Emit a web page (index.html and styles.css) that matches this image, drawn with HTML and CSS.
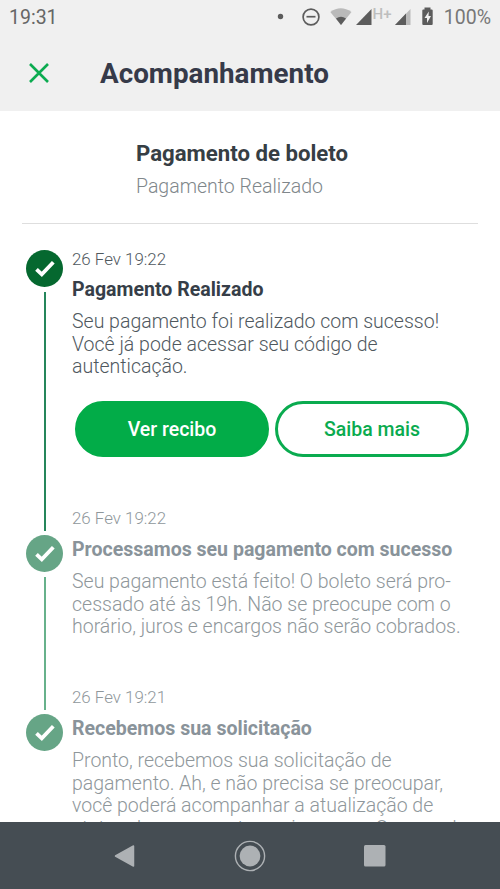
FILE: index.html
```html
<!DOCTYPE html>
<html lang="pt-BR">
<head>
<meta charset="utf-8">
<title>Acompanhamento</title>
<link rel="stylesheet" href="styles.css">
</head>
<body>
<div class="screen">
  <header class="top">
    <div class="status">
      <span class="clock">19:31</span>
      <svg class="status-icons" width="164" height="34" viewBox="0 0 164 34">
        <circle cx="10.5" cy="16.5" r="2.7" fill="#5c5c5c"/>
        <circle cx="41" cy="17" r="7.9" fill="none" stroke="#5c5c5c" stroke-width="1.7"/>
        <path d="M36.5 16.7h9" stroke="#5c5c5c" stroke-width="1.7"/>
        <path d="M60.3 12Q70.700 4.500 81.500 12L71 25Z" fill="#bababa"/>
        <path d="M66 18.600Q71 15 76 18.600L71 25Z" fill="#5c5c5c"/>
        <path d="M86 25L101.500 9V25Z" fill="#5c5c5c"/>
        <path d="M125 25L140.500 9V25Z" fill="#bababa"/>
        <path d="M125 25L136 13.500V25Z" fill="#5c5c5c"/>
        <path d="M154.500 7.500h6v2h1.200q1 0 1 1V24q0 1-1 1h-8.400q-1 0-1-1V10.500q0-1 1-1h1.200Z" fill="#5c5c5c"/>
        <path d="M158.800 11.500L154.500 18h2.500v5l4-7h-2.500Z" fill="#f0f0f0"/>
        <text class="network" x="102.500" y="19">H+</text>
      </svg>
      <span class="battery">100%</span>
    </div>
    <div class="appbar">
      <svg class="close" width="20" height="20" viewBox="0 0 20 20"><path d="M1 1L19 19M19 1L1 19" stroke="#0cab50" stroke-width="2.600"/></svg>
      <h1>Acompanhamento</h1>
    </div>
  </header>
  <main>
    <section class="summary">
      <h2>Pagamento de boleto</h2>
      <p>Pagamento Realizado</p>
    </section>
    <ol class="timeline">
      <li class="step current">
        <div class="rail"><svg class="check" width="37" height="37" viewBox="0 0 37 37"><circle cx="18.500" cy="18.500" r="18.500"/><path d="M10.500 19.300L15.800 24.400L27.300 12.300"/></svg><i class="line"></i></div>
        <div class="body">
          <time>26 Fev 19:22</time>
          <h3>Pagamento Realizado</h3>
          <p>Seu pagamento foi realizado com sucesso!<br>Você já pode acessar seu código de<br>autenticação.</p>
          <div class="actions"><button class="primary">Ver recibo</button><button>Saiba mais</button></div>
        </div>
      </li>
      <li class="step done">
        <div class="rail"><svg class="check" width="37" height="37" viewBox="0 0 37 37"><circle cx="18.500" cy="18.500" r="18.500"/><path d="M10.500 19.300L15.800 24.400L27.300 12.300"/></svg><i class="line"></i></div>
        <div class="body">
          <time>26 Fev 19:22</time>
          <h3>Processamos seu pagamento com sucesso</h3>
          <p>Seu pagamento está feito! O boleto será pro-<br>cessado até às 19h. Não se preocupe com o<br>horário, juros e encargos não serão cobrados.</p>
        </div>
      </li>
      <li class="step last">
        <div class="rail"><svg class="check" width="37" height="37" viewBox="0 0 37 37"><circle cx="18.500" cy="18.500" r="18.500"/><path d="M10.500 19.300L15.800 24.400L27.300 12.300"/></svg></div>
        <div class="body">
          <time>26 Fev 19:21</time>
          <h3>Recebemos sua solicitação</h3>
          <p>Pronto, recebemos sua solicitação de<br>pagamento. Ah, e não precisa se preocupar,<br>você poderá acompanhar a atualização de<br>status do pagamento aqui mesmo. O prazo de</p>
        </div>
      </li>
    </ol>
  </main>
  <nav>
    <svg width="22" height="24" viewBox="0 0 22 24"><path d="M1.500 12L19.500 2V22Z" fill="#adb1b4" stroke="#adb1b4" stroke-width="1.500" stroke-linejoin="round"/></svg>
    <svg width="32" height="32" viewBox="0 0 32 32"><circle cx="16" cy="16" r="14.600" fill="none" stroke="#adb1b4" stroke-width="1.400"/><circle cx="16" cy="16" r="10.400" fill="#adb1b4"/></svg>
    <svg width="22" height="22" viewBox="0 0 22 22"><rect width="21.500" height="21.500" rx="1.500" fill="#adb1b4"/></svg>
  </nav>
</div>
</body>
</html>
```
FILE: styles.css
```css
* { box-sizing: border-box; margin: 0; padding: 0; }
body { font-family: Roboto, "Liberation Sans", sans-serif; background: #fff; }
.screen { width: 500px; height: 889px; display: flex; flex-direction: column; overflow: hidden; }
.top { flex: none; height: 111px; background: #f0f0f0; }
.status { display: flex; align-items: center; height: 34px; padding: 0 9px; color: #666; }
.clock { font-size: 19.5px; line-height: 34px; margin-right: auto; padding-top: 2px; }
.status-icons { margin-right: 10px; }
.network { font: 500 15px Roboto, sans-serif; fill: #bebebe; }
.battery { font-size: 19.500px; color: #777; padding-top: 1px; }
.appbar { display: flex; align-items: center; gap: 51px; height: 77px; padding-left: 29px; }
h1 { font-size: 27.800px; font-weight: 700; color: #363a49; padding-top: 1px; }
main { flex: 1; min-height: 0; overflow: hidden; }
.summary { height: 113px; margin: 0 22px; padding: 27px 0 0 114px; border-bottom: 1px solid #dedede; }
h2 { font-size: 22.200px; line-height: 30px; color: #363e44; font-weight: 700; }
.summary p { font-size: 19.500px; line-height: 26px; margin-top: 6px; font-weight: 300; color: #80878b; }
.timeline { list-style: none; }
.step { display: flex; padding-left: 26px; }
.current { height: 285px; margin-top: 26px; }
.done { height: 179px; }
.rail { width: 46px; flex: none; display: flex; flex-direction: column; }
.check { flex: none; fill: #05682f; }
.check path { fill: none; stroke: #fff; stroke-width: 3.800px; }
.line { flex: 1; width: 2px; margin: 5px 0 4px 18px; background: #25865b; }
.done .check, .last .check { fill: #66a586; }
.done .line { background: #67b18b; }
.body { color: #4f585e; white-space: nowrap; }
time { display: block; font-size: 16.900px; line-height: 20px; margin-top: -1px; font-weight: 300; }
h3 { font-size: 19.550px; line-height: 24px; margin-top: 9px; color: #363e48; }
.body p { font-size: 19.500px; line-height: 22.700px; margin-top: 9px; font-weight: 300; }
.done .body, .last .body { color: #8f979b; margin-top: -26px; }
.done h3, .last h3 { color: #89939a; margin-top: 10px; }
.actions { display: flex; gap: 6px; margin: 22px 0 0 3px; }
button { width: 194px; height: 56px; border: 3px solid #0aab4f; border-radius: 28px; background: #fff; color: #0aab4f; font: 500 19.500px Roboto, sans-serif; }
.primary { background: #02ac48; border-color: #02ac48; color: #fff; }
nav { flex: none; height: 67px; background: #454d53; display: flex; align-items: center; justify-content: space-between; padding: 0 114px; }
```
